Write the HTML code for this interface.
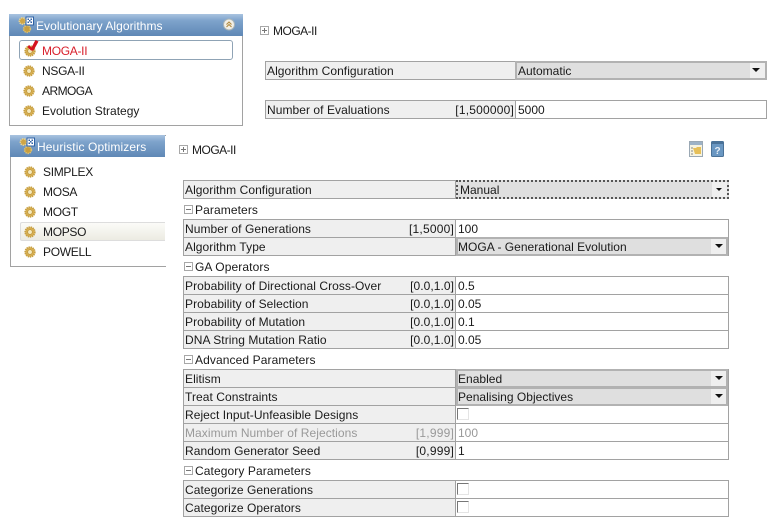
<!DOCTYPE html>
<html><head><meta charset="utf-8">
<style>
html,body{margin:0;padding:0;background:#fff}
body{width:775px;height:530px;overflow:hidden;position:relative;font-family:"Liberation Sans",Arial,sans-serif;font-size:12px;color:#1a1a1a}
div,span,svg{position:absolute;box-sizing:border-box}
.t{white-space:nowrap;line-height:16px;height:16px}
.up{letter-spacing:-.3px;margin-top:1px}
.hd{background:linear-gradient(#a9c4e0 0,#7ea3cb 30%,#5f88b6 100%);color:#fff}
.tb{left:183px;width:546px;border:1px solid #a2a2a2;background:#fff}
.r{left:0;width:544px;height:18px;border-bottom:1px solid #a2a2a2}
.r:last-child{border-bottom:0}
.l{left:0;top:0;width:272px;height:17px;background:#efefef;border-right:1px solid #a2a2a2;padding:1px 0 0 1px;line-height:17px;white-space:nowrap;letter-spacing:.06px}
.b{right:272px;top:1px;line-height:17px;padding-right:2px;white-space:nowrap;letter-spacing:.2px}
.b.d{letter-spacing:.05px}
.v{left:273px;top:1px;line-height:17px;padding-left:1px;white-space:nowrap}
.sel{left:272px;top:-1px;width:272px;height:19px;background:#dfdfdf;border:2px solid #b2b2b2;line-height:17px;padding-left:0;white-space:nowrap;letter-spacing:.02px}
.sel i{position:absolute;right:0;top:0;width:15px;height:15px;background:#efefef}
.sel i:after{content:"";position:absolute;left:4px;top:5px;border-left:4px solid transparent;border-right:4px solid transparent;border-top:4px solid #111}
.cb{left:273px;top:2px;width:12px;height:12px;background:#fff;border:1px solid #e4e4e4;border-left-color:#777;border-top-color:#777}
.g{color:#999}
.ex{width:9px;height:9px;border:1px solid #a8a8a8;background:#fff}
.ex:before{content:"";position:absolute;left:1px;top:3px;width:5px;height:1px;background:#777}
.ex.p:after{content:"";position:absolute;left:3px;top:1px;width:1px;height:5px;background:#777}
.sec{line-height:16px;white-space:nowrap;letter-spacing:.1px}
.gear{width:12px;height:12px}
.hm{letter-spacing:-.5px}
</style></head><body>
<svg width="0" height="0" style="position:absolute">
<defs>
<g id="gear"><circle cx="6" cy="6" r="4.8" fill="#d8b052" stroke="#c79f42" stroke-dasharray="1.4 .7" stroke-width="1.7"/><circle cx="6" cy="6" r="2.3" fill="#f5e9bd" stroke="#b8913a" stroke-width=".7"/></g>
<g id="logo"><circle cx="6.5" cy="5" r="3.2" fill="#cfa545" stroke="#e6d398" stroke-dasharray="1.4 .8" stroke-width="1.5"/><circle cx="11" cy="13" r="3.4" fill="#c79d3e" stroke="#dcc070" stroke-dasharray="1.4 .8" stroke-width="1.6"/><rect x="10" y="1" width="7.5" height="8" fill="#fff" stroke="#2f62a5"/><path d="M11.5 2.5h1.5v1.5h-1.5zM14.5 2.5h1.5v1.5h-1.5zM13 4h1.5v1.5h-1.5zM11.5 5.5h1.5v1.5h-1.5zM14.5 5.5h1.5v1.5h-1.5z" fill="#2f62a5"/></g>
</defs></svg>

<!-- panel 1 -->
<div style="left:9px;top:14px;width:234px;height:112px;border:1px solid #a2a2a2;background:#fff"></div>
<div class="hd" style="left:9px;top:14px;width:234px;height:22px"></div>
<svg style="left:16px;top:16px" width="18" height="19"><use href="#logo"/></svg>
<div class="t" style="left:36px;top:18px;color:#fff;letter-spacing:.05px">Evolutionary Algorithms</div>
<svg style="left:222px;top:18px" width="14" height="14"><circle cx="7" cy="6.5" r="5.5" fill="#f2efe6" stroke="#a8b4b8"/><path d="M4.5 6.5L7 4l2.5 2.5M4.5 9L7 6.5 9.5 9" fill="none" stroke="#b08a40" stroke-width="1.1"/></svg>
<div style="left:19px;top:40px;width:214px;height:20px;border:1px solid #8fa3b5;border-radius:3px;background:#fff"></div>
<svg class="gear" style="left:24px;top:45px"><use href="#gear"/></svg>
<svg style="left:27px;top:40px" width="13" height="13"><path d="M2 5l2.5 2.5L8.5 0l3 1.5L6.5 10.5H4L.5 7z" fill="#d4121e"/></svg>
<div class="t up" style="left:42px;top:42px;color:#d8202c">MOGA-II</div>
<svg class="gear" style="left:23px;top:65px"><use href="#gear"/></svg>
<div class="t up" style="left:42px;top:62px">NSGA-II</div>
<svg class="gear" style="left:23px;top:85px"><use href="#gear"/></svg>
<div class="t" style="left:42px;top:83px;letter-spacing:-.55px">ARMOGA</div>
<svg class="gear" style="left:23px;top:105px"><use href="#gear"/></svg>
<div class="t" style="left:42px;top:103px">Evolution Strategy</div>

<!-- panel 2 -->
<div style="left:10px;top:135px;width:156px;height:132px;border:1px solid #a2a2a2;border-right:0;background:#fff"></div>
<div class="hd" style="left:10px;top:135px;width:155px;height:22px"></div>
<svg style="left:17px;top:137px" width="18" height="19"><use href="#logo"/></svg>
<div class="t" style="left:37px;top:139px;color:#fff;letter-spacing:.1px">Heuristic Optimizers</div>
<div style="left:20px;top:222px;width:145px;height:19px;background:linear-gradient(#fbfbf8,#ecebe2);border:1px solid #ddd;border-right:0;border-radius:2px 0 0 2px"></div>
<svg class="gear" style="left:24px;top:166px"><use href="#gear"/></svg>
<div class="t up" style="left:43px;top:163px">SIMPLEX</div>
<svg class="gear" style="left:24px;top:186px"><use href="#gear"/></svg>
<div class="t up" style="left:43px;top:183px">MOSA</div>
<svg class="gear" style="left:24px;top:206px"><use href="#gear"/></svg>
<div class="t up" style="left:43px;top:203px">MOGT</div>
<svg class="gear" style="left:24px;top:226px"><use href="#gear"/></svg>
<div class="t up" style="left:43px;top:223px">MOPSO</div>
<svg class="gear" style="left:24px;top:246px"><use href="#gear"/></svg>
<div class="t up" style="left:43px;top:243px">POWELL</div>

<!-- top right -->
<div class="ex p" style="left:260px;top:26px"></div>
<div class="t hm" style="left:273px;top:23px">MOGA-II</div>
<div style="left:265px;top:61px;width:502px;height:19px;border:1px solid #a2a2a2;background:#efefef;line-height:19px;padding-left:1px;letter-spacing:.06px">Algorithm Configuration</div>
<div style="left:515px;top:61px;width:252px;height:19px;background:#dfdfdf;border:2px solid #b2b2b2;line-height:17px;padding-left:1px">Automatic<span style="right:0;top:0;width:15px;height:15px;background:#efefef"></span><span style="right:5px;top:5px;border-left:4px solid transparent;border-right:4px solid transparent;border-top:4px solid #111"></span></div>
<div style="left:265px;top:100px;width:502px;height:19px;border:1px solid #a2a2a2;background:#fff"></div>
<div style="left:266px;top:101px;width:250px;height:17px;background:#efefef;border-right:1px solid #a2a2a2;line-height:19px;padding-left:1px;letter-spacing:.06px">Number of Evaluations<span style="right:1px;top:0;letter-spacing:.2px">[1,500000]</span></div>
<div class="t" style="left:518px;top:102px;line-height:17px">5000</div>

<!-- header 2 -->
<div class="ex p" style="left:179px;top:145px"></div>
<div class="t hm" style="left:192px;top:142px">MOGA-II</div>
<svg style="left:689px;top:141px" width="15" height="17"><rect x=".5" y=".5" width="13" height="15" fill="#f6f3e0" stroke="#9aa8b4"/><rect x="1" y="1" width="12" height="3" fill="#9db2c6"/><path d="M4 7h3l1-1h4v7H6z" fill="#e6bf58"/><path d="M2 7h2M2 10h2M2 13h2" stroke="#888"/></svg>
<svg style="left:711px;top:141px" width="14" height="17"><rect x=".5" y=".5" width="12" height="15" rx="1" fill="#6a97c2" stroke="#4a7298"/><rect x="1" y="1" width="11" height="2" fill="#4a7298"/><text x="3.5" y="13" font-family="Liberation Sans" font-size="10" font-weight="bold" fill="#e6eef6">?</text></svg>

<!-- main -->
<div class="tb" style="top:180px;height:19px"><div class="l">Algorithm Configuration</div></div>
<div style="left:456px;top:180px;width:273px;height:19px;background:#dfdfdf;border:2px dotted #555;line-height:17px;padding-left:2px">Manual<span style="right:0;top:0;width:15px;height:15px;background:#efefef"></span><span style="right:5px;top:6px;border-left:3px solid transparent;border-right:3px solid transparent;border-top:3px solid #111"></span></div>

<div class="ex" style="left:184px;top:205px"></div><div class="sec" style="left:195px;top:202px">Parameters</div>
<div class="tb" style="top:219px;height:37px">
<div class="r" style="top:0"><div class="l">Number of Generations</div><div class="b">[1,5000]</div><div class="v">100</div></div>
<div class="r" style="top:18px"><div class="l">Algorithm Type</div><div class="sel">MOGA - Generational Evolution<i></i></div></div>
</div>

<div class="ex" style="left:184px;top:262px"></div><div class="sec" style="left:195px;top:259px">GA Operators</div>
<div class="tb" style="top:276px;height:73px">
<div class="r" style="top:0"><div class="l">Probability of Directional Cross-Over</div><div class="b d">[0.0,1.0]</div><div class="v">0.5</div></div>
<div class="r" style="top:18px"><div class="l">Probability of Selection</div><div class="b d">[0.0,1.0]</div><div class="v">0.05</div></div>
<div class="r" style="top:36px"><div class="l">Probability of Mutation</div><div class="b d">[0.0,1.0]</div><div class="v">0.1</div></div>
<div class="r" style="top:54px"><div class="l">DNA String Mutation Ratio</div><div class="b d">[0.0,1.0]</div><div class="v">0.05</div></div>
</div>

<div class="ex" style="left:184px;top:355px"></div><div class="sec" style="left:195px;top:352px">Advanced Parameters</div>
<div class="tb" style="top:369px;height:91px">
<div class="r" style="top:0"><div class="l">Elitism</div><div class="sel">Enabled<i></i></div></div>
<div class="r" style="top:18px"><div class="l">Treat Constraints</div><div class="sel">Penalising Objectives<i></i></div></div>
<div class="r" style="top:36px"><div class="l">Reject Input-Unfeasible Designs</div><div class="cb"></div></div>
<div class="r" style="top:54px"><div class="l g">Maximum Number of Rejections</div><div class="b g">[1,999]</div><div class="v g">100</div></div>
<div class="r" style="top:72px"><div class="l">Random Generator Seed</div><div class="b">[0,999]</div><div class="v">1</div></div>
</div>

<div class="ex" style="left:184px;top:466px"></div><div class="sec" style="left:195px;top:463px">Category Parameters</div>
<div class="tb" style="top:480px;height:37px">
<div class="r" style="top:0"><div class="l">Categorize Generations</div><div class="cb"></div></div>
<div class="r" style="top:18px"><div class="l">Categorize Operators</div><div class="cb"></div></div>
</div>
</body></html>
